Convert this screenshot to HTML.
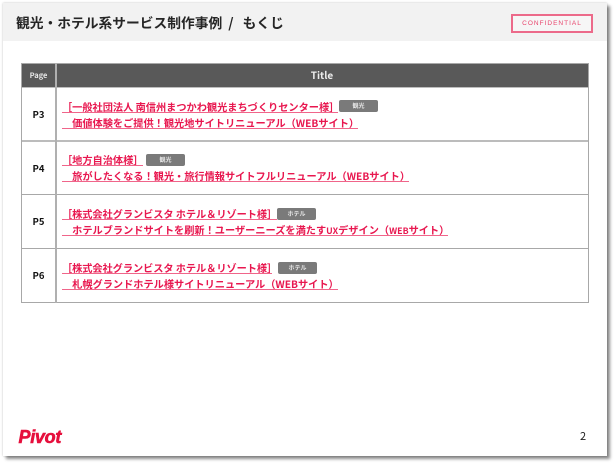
<!DOCTYPE html>
<html lang="ja"><head><meta charset="utf-8">
<style>
html,body{margin:0;padding:0;background:#fff;}
body{width:616px;height:465px;position:relative;overflow:hidden;font-family:"Liberation Sans","Noto Sans CJK JP",sans-serif;}
.abs{position:absolute;}
#slide{left:3px;top:3px;width:604px;height:453px;background:#fff;box-shadow:0 0 2px rgba(0,0,0,.25),3px 3px 3px rgba(0,0,0,.45);}
#head{left:3px;top:3px;width:604px;height:38px;background:#f2f2f2;}
#title{left:16px;top:11.5px;font-size:13.75px;line-height:20px;font-weight:700;color:#262626;white-space:nowrap;font-family:"Noto Sans CJK JP",sans-serif;filter:blur(.25px);}
#title span{margin:0 9px 0 6px;}
#conf{left:511px;top:14px;width:78px;height:15px;border:2px solid #ec6a8a;color:#e8446c;font-size:6.5px;letter-spacing:1px;text-align:center;line-height:15px;background:#f6f6f6;filter:blur(.25px);}
.h{background:#595959;}
.ln{background:#a8a8a8;}
.t{position:absolute;left:62px;height:10px;line-height:10px;font-size:10.2px;font-weight:700;color:#e8174f;white-space:nowrap;font-family:"Noto Sans CJK JP",sans-serif;box-sizing:content-box;filter:blur(.25px);}
.u{position:absolute;left:62px;height:1px;background:#f0658a;}
.t i{font-style:normal;font-size:8.8px;}
.tag{position:absolute;width:39px;height:12px;background:#7a7a7a;border-radius:2px;color:#e4e4e4;font-size:6px;line-height:12px;text-align:center;font-weight:700;font-family:"Noto Sans CJK JP",sans-serif;}
.p{position:absolute;left:22px;width:33px;text-align:center;font-size:9.5px;line-height:14px;font-weight:700;color:#111;font-family:"Noto Sans CJK JP",sans-serif;}
</style></head><body>
<div class="abs" id="slide"></div>
<div class="abs" id="head"></div>
<div class="abs" id="title">観光・ホテル系サービス制作事例<span>/</span>もくじ</div>
<div class="abs" id="conf">CONFIDENTIAL</div>

<div class="abs h" style="left:21px;top:63px;width:568px;height:24px"></div>
<div class="abs ln" style="left:21px;top:63px;width:568px;height:1px"></div>
<div class="abs ln" style="left:21px;top:87px;width:568px;height:1px;background:#bdbdbd"></div>
<div class="abs ln" style="left:21px;top:140px;width:568px;height:2px;background:#bcbcbc"></div>
<div class="abs ln" style="left:21px;top:194px;width:568px;height:1px"></div>
<div class="abs ln" style="left:21px;top:248px;width:568px;height:1px"></div>
<div class="abs ln" style="left:21px;top:302px;width:568px;height:1px"></div>
<div class="abs ln" style="left:21px;top:63px;width:1px;height:240px"></div>
<div class="abs ln" style="left:55px;top:63px;width:2px;height:240px;background:#b0b0b0"></div>
<div class="abs ln" style="left:588px;top:63px;width:1px;height:240px"></div>

<div class="p" style="top:69px;color:#e8e8e8;font-size:7.5px">Page</div>
<div class="abs" style="left:56px;top:68px;width:532px;text-align:center;color:#eee;font-size:10px;line-height:14px;font-weight:700;font-family:'Noto Sans CJK JP',sans-serif">Title</div>

<div class="p" style="top:107px">P3</div>
<div class="p" style="top:161px">P4</div>
<div class="p" style="top:214px">P5</div>
<div class="p" style="top:268px">P6</div>

<div class="t" style="top:102px">［一般社団法人 南信州まつかわ観光まちづくりセンター様］</div>
<div class="u" style="top:112px;width:276px"></div>
<div class="tag" style="left:339px;top:100px">観光</div>
<div class="t" style="top:118px">　価値体験をご提供！観光地サイトリニューアル（WEBサイト）</div>
<div class="u" style="top:128px;width:296px"></div>

<div class="t" style="top:155px">［地方自治体様］</div>
<div class="u" style="top:165px;width:81px"></div>
<div class="tag" style="left:146px;top:154px">観光</div>
<div class="t" style="top:171px">　旅がしたくなる！観光・旅行情報サイトフルリニューアル（WEBサイト）</div>
<div class="u" style="top:181px;width:347px"></div>

<div class="t" style="top:209px;letter-spacing:-.05px">［株式会社グランビスタ ホテル＆リゾート様］</div>
<div class="u" style="top:219px;width:215px"></div>
<div class="tag" style="left:277px;top:208px">ホテル</div>
<div class="t" style="top:225px">　ホテルブランドサイトを刷新！ユーザーニーズを満たす<i>UX</i>デザイン（<i>WEB</i>サイト）</div>
<div class="u" style="top:235px;width:386px"></div>

<div class="t" style="top:263px;letter-spacing:-.05px">［株式会社グランビスタ ホテル＆リゾート様］</div>
<div class="u" style="top:273px;width:210px"></div>
<div class="tag" style="left:278px;top:262px">ホテル</div>
<div class="t" style="top:279px">　札幌グランドホテル様サイトリニューアル（WEBサイト）</div>
<div class="u" style="top:289px;width:276px"></div>

<div class="abs" style="left:18.5px;top:427px;font-family:'Liberation Sans',sans-serif;font-weight:700;font-style:italic;font-size:18px;line-height:20px;color:#e60f3c;letter-spacing:-.3px;-webkit-text-stroke:.6px #e60f3c">Pivot</div>
<div class="abs" style="left:580px;top:429px;font-size:11px;line-height:14px;color:#222;font-family:'Noto Sans CJK JP',sans-serif">2</div>
</body></html>
